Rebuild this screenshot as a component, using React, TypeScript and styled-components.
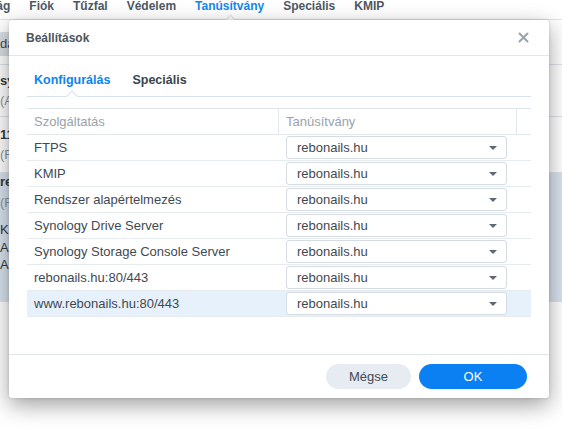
import styled, { createGlobalStyle } from "styled-components";

const GlobalStyle = createGlobalStyle`
  html, body {
    margin: 0;
    padding: 0;
    background: #ffffff;
    overflow: hidden;
  }
  body {
    font-family: "Liberation Sans", Arial, sans-serif;
    color: #414b55;
  }
`;

const Page = styled.div`
  position: relative;
  width: 562px;
  height: 430px;
  overflow: hidden;
  background: #ffffff;
`;

/* ---------- background control panel ---------- */

const BgNav = styled.nav`
  height: 20px;
  box-sizing: border-box;
  border-bottom: 1px solid #dfe4ea;
  display: flex;
  gap: 19px;
  margin-left: -47px;
`;

const BgNavItem = styled.span<{ $active?: boolean }>`
  position: relative;
  font-size: 12px;
  line-height: 12px;
  font-weight: bold;
  white-space: nowrap;
  color: ${(p) => (p.$active ? "#1587ee" : "#4f5862")};
  &::after {
    content: "";
    display: ${(p) => (p.$active ? "block" : "none")};
    position: absolute;
    left: 50%;
    top: 16px;
    width: 6px;
    height: 6px;
    margin-left: -3px;
    background: #ffffff;
    border-top: 1px solid #dfe4ea;
    border-left: 1px solid #dfe4ea;
    transform: rotate(45deg);
  }
`;

const BgToolbar = styled.div`
  height: 45px;
  box-sizing: border-box;
  border-bottom: 1px solid #dfe4ea;
  display: flex;
  align-items: center;
  padding-top: 4px;
`;

const BgButton = styled.span`
  width: 10px;
  overflow: hidden;
  height: 24px;
  line-height: 24px;
  background: #dadfe5;
  font-size: 13px;
  color: #414b55;
  white-space: nowrap;
`;

const BgItem = styled.div<{ $selected?: boolean; $pad: string }>`
  padding: ${(p) => p.$pad};
  border-bottom: 1px solid #dfe4ea;
  background: ${(p) => (p.$selected ? "#d8e3ef" : "#ffffff")};
  font-size: 13px;
  white-space: nowrap;
`;

/* only the left edge of the list shows beside the dialog */
const BgText = styled.div`
  width: 9px;
  overflow: hidden;
`;

const BgTitle = styled.div`
  font-weight: bold;
  line-height: 16px;
  color: #333a41;
`;

const BgSub = styled.div<{ $gap: number }>`
  margin-top: ${(p) => p.$gap}px;
  line-height: 16px;
  color: #8c959e;
`;

const BgDetail = styled.div<{ $gap: number }>`
  margin-top: ${(p) => p.$gap}px;
  line-height: 16px;
  color: #333a41;
`;

/* ---------- dialog ---------- */

const Dialog = styled.div`
  position: absolute;
  left: 9px;
  top: 20px;
  width: 540px;
  height: 378px;
  background: #ffffff;
  border-radius: 3px;
  box-shadow: 0 7px 22px rgba(0, 0, 0, 0.38), 0 0 3px rgba(0, 0, 0, 0.16);
  display: flex;
  flex-direction: column;
`;

const Header = styled.div`
  height: 36px;
  box-sizing: border-box;
  border-bottom: 1px solid #e1e6eb;
  display: flex;
  align-items: center;
  justify-content: space-between;
  padding: 0 20px 0 17px;
`;

const Title = styled.span`
  font-size: 12px;
  font-weight: bold;
  color: #4c545c;
`;

const CloseButton = styled.button`
  border: none;
  background: none;
  padding: 0;
  width: 11px;
  height: 11px;
  display: flex;
  cursor: pointer;
`;

const Body = styled.div`
  flex: 1;
  padding: 0 18px;
`;

const Tabs = styled.div`
  display: flex;
  gap: 8px;
  padding-top: 16px;
  border-bottom: 1px solid #d9e3ed;
`;

const Tab = styled.span<{ $active?: boolean }>`
  position: relative;
  padding: 0 7px 8px;
  font-size: 12.5px;
  line-height: 16px;
  font-weight: bold;
  color: ${(p) => (p.$active ? "#0a84f0" : "#3c444c")};
  &::after {
    content: "";
    display: ${(p) => (p.$active ? "block" : "none")};
    position: absolute;
    left: 50%;
    bottom: -4px;
    width: 7px;
    height: 7px;
    margin-left: -4px;
    background: #ffffff;
    border-top: 1px solid #d9e3ed;
    border-left: 1px solid #d9e3ed;
    transform: rotate(45deg);
  }
`;

const Table = styled.div`
  margin-top: 11px;
  border-top: 1px solid #dfe5eb;
`;

const HeadRow = styled.div`
  display: grid;
  grid-template-columns: 252px 238px 14px;
  height: 26px;
  box-sizing: border-box;
  border-bottom: 1px solid #e3e8ed;
`;

const HeadCell = styled.div<{ $divider?: boolean }>`
  display: flex;
  align-items: center;
  padding-left: 7px;
  font-size: 13px;
  color: #9aa2ab;
  border-right: ${(p) => (p.$divider ? "1px solid #e3e8ed" : "none")};
`;

const Row = styled.div<{ $selected?: boolean }>`
  display: grid;
  grid-template-columns: 252px 1fr;
  height: 26px;
  box-sizing: border-box;
  border-bottom: 1px solid #e6ebf0;
  background: ${(p) => (p.$selected ? "#e6f1fc" : "transparent")};
`;

const Cell = styled.div`
  display: flex;
  align-items: center;
  padding-left: 7px;
  font-size: 13px;
  color: #3f4953;
  white-space: nowrap;
`;

const Select = styled.div`
  width: 221px;
  height: 23px;
  box-sizing: border-box;
  border: 1px solid #d5dce4;
  border-radius: 3px;
  background: #ffffff;
  display: flex;
  align-items: center;
  justify-content: space-between;
  padding: 0 9px 0 10px;
  font-size: 13px;
  color: #3f4953;
`;

const Caret = styled.span`
  width: 0;
  height: 0;
  border-left: 4px solid transparent;
  border-right: 4px solid transparent;
  border-top: 4px solid #5f6872;
`;

const Footer = styled.div`
  height: 44px;
  box-sizing: border-box;
  border-top: 1px solid #e1e6eb;
  display: flex;
  align-items: center;
  justify-content: flex-end;
  gap: 8px;
  padding-right: 22px;
`;

const Button = styled.button<{ $primary?: boolean; $width: number }>`
  width: ${(p) => p.$width}px;
  height: 25px;
  border: none;
  border-radius: 13px;
  font-family: "Liberation Sans", Arial, sans-serif;
  font-size: 13px;
  background: ${(p) => (p.$primary ? "#0b80f2" : "#e7ecf2")};
  color: ${(p) => (p.$primary ? "#ffffff" : "#414b55")};
  cursor: pointer;
`;

const services = [
  "FTPS",
  "KMIP",
  "Rendszer alapértelmezés",
  "Synology Drive Server",
  "Synology Storage Console Server",
  "rebonails.hu:80/443",
  "www.rebonails.hu:80/443",
];

const navItems = ["Biztonság", "Fiók", "Tűzfal", "Védelem", "Tanúsítvány", "Speciális", "KMIP"];

export default function App() {
  return (
    <Page>
      <GlobalStyle />
      <BgNav>
        {navItems.map((n) => (
          <BgNavItem key={n} $active={n === "Tanúsítvány"}>
            {n}
          </BgNavItem>
        ))}
      </BgNav>
      <BgToolbar>
        <BgButton>dá</BgButton>
      </BgToolbar>
      <BgItem $pad="8px 0 7px">
        <BgText>
          <BgTitle>synology.me</BgTitle>
          <BgSub $gap={4}>(Alapértelmezett)</BgSub>
        </BgText>
      </BgItem>
      <BgItem $pad="10px 0 9px">
        <BgText>
          <BgTitle>1192.168.1.10</BgTitle>
          <BgSub $gap={4}>(Független)</BgSub>
        </BgText>
      </BgItem>
      <BgItem $selected $pad="1px 0 28px">
        <BgText>
          <BgTitle>rebonails.hu</BgTitle>
          <BgSub $gap={5}>(Független)</BgSub>
          <BgDetail $gap={11}>Kiállító: R3</BgDetail>
          <BgDetail $gap={2}>Alternatív név</BgDetail>
          <BgDetail $gap={1}>A tanúsítvány lejár</BgDetail>
        </BgText>
      </BgItem>

      <Dialog>
        <Header>
          <Title>Beállítások</Title>
          <CloseButton aria-label="Bezárás">
            <svg width="11" height="11" viewBox="0 0 11 11">
              <path d="M1.5 1.5 L9.5 9.5 M9.5 1.5 L1.5 9.5" stroke="#9aa2aa" strokeWidth="2" strokeLinecap="round" />
            </svg>
          </CloseButton>
        </Header>
        <Body>
          <Tabs>
            <Tab $active>Konfigurálás</Tab>
            <Tab>Speciális</Tab>
          </Tabs>
          <Table>
            <HeadRow>
              <HeadCell $divider>Szolgáltatás</HeadCell>
              <HeadCell $divider>Tanúsítvány</HeadCell>
              <HeadCell />
            </HeadRow>
            {services.map((s, i) => (
              <Row key={s} $selected={i === services.length - 1}>
                <Cell>{s}</Cell>
                <Cell>
                  <Select>
                    rebonails.hu
                    <Caret />
                  </Select>
                </Cell>
              </Row>
            ))}
          </Table>
        </Body>
        <Footer>
          <Button $width={85}>Mégse</Button>
          <Button $primary $width={108}>
            OK
          </Button>
        </Footer>
      </Dialog>
    </Page>
  );
}
